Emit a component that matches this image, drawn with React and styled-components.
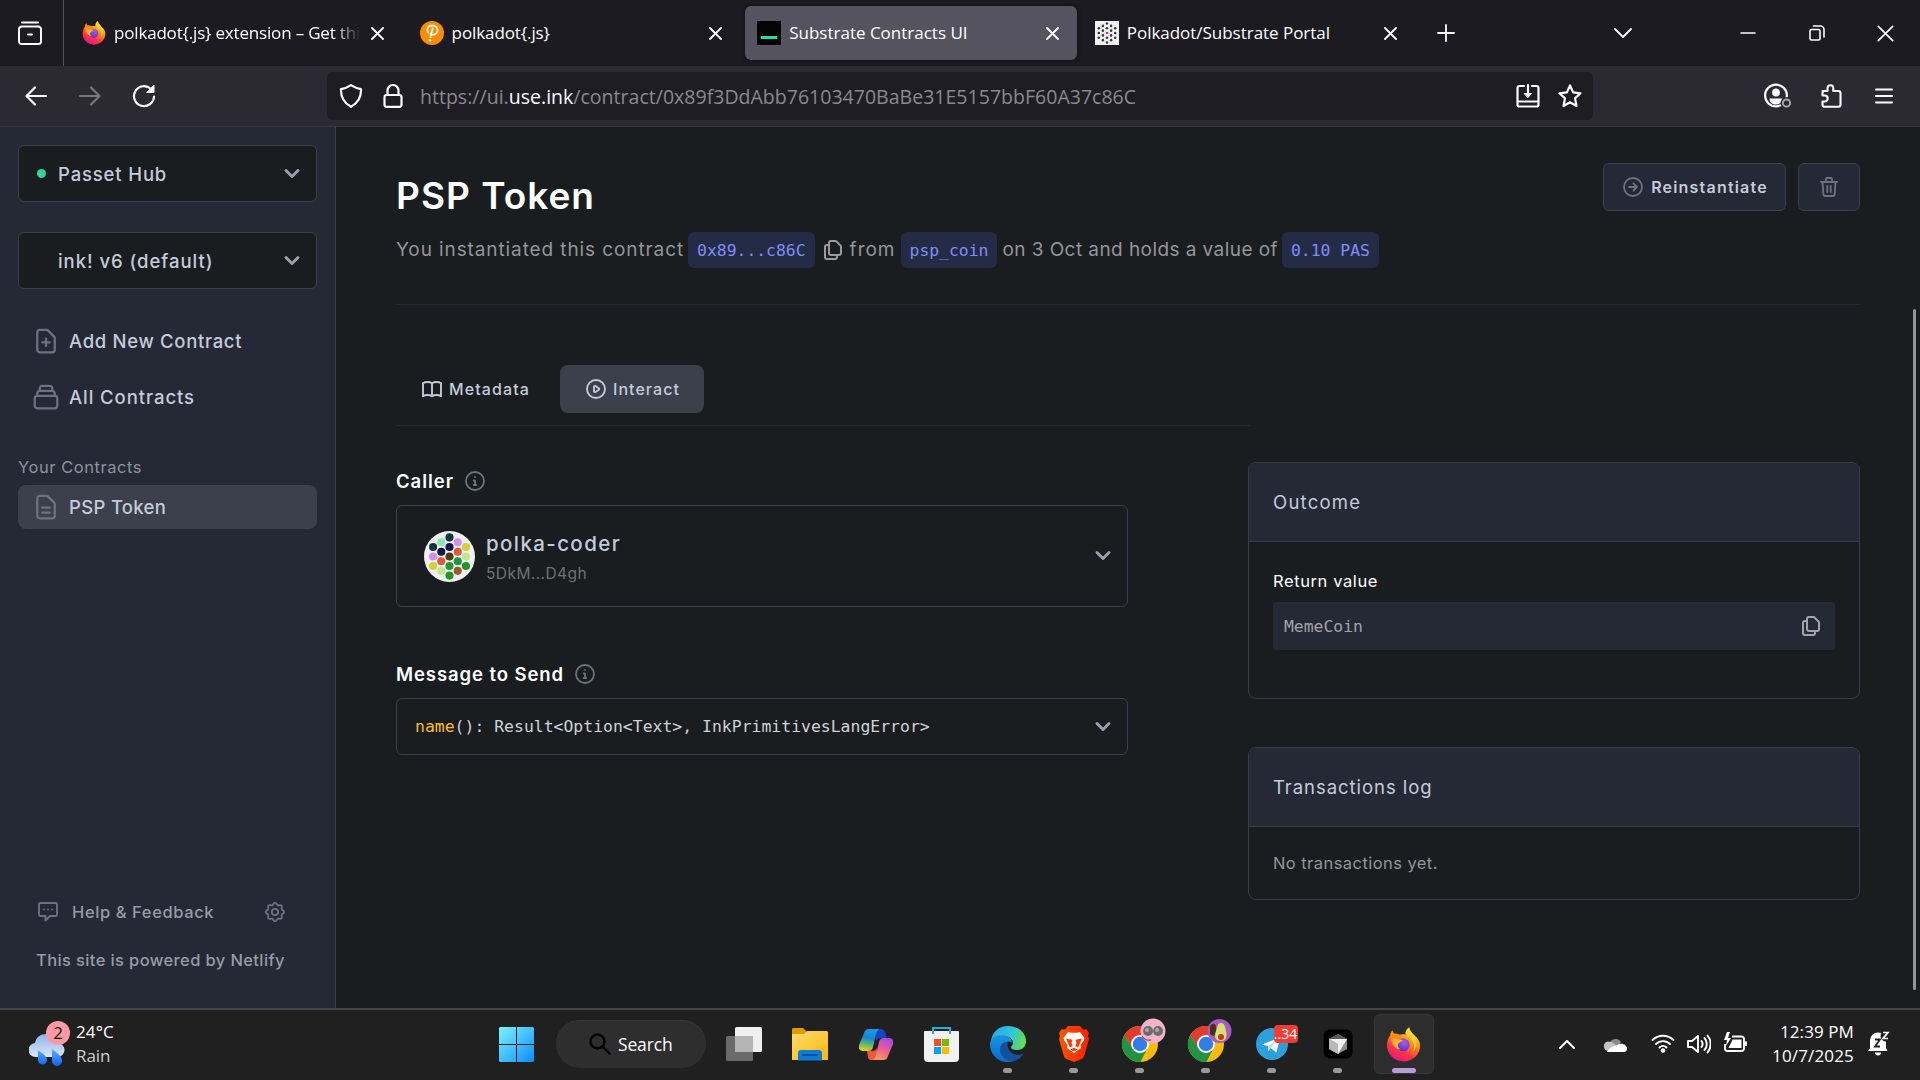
import React from "react";
import styled, { createGlobalStyle } from "styled-components";

const SANS = `Inter, Roboto, "Liberation Sans", sans-serif`;
const SYSTEM = `"Open Sans", "Noto Sans", sans-serif`;
const MONO = `"DejaVu Sans Mono", "Liberation Mono", monospace`;

const Global = createGlobalStyle`
  *, *::before, *::after { box-sizing: border-box; }
  body { margin: 0; background: #1a1d1f; font-family: ${SANS}; overflow: hidden; }
  svg { display: block; flex: none; }
`;

const Screen = styled.div`
  width: 1920px;
  height: 1080px;
  display: flex;
  flex-direction: column;
  overflow: hidden;
`;

const Text = styled.span`
  display: block;
  white-space: nowrap;
  font-family: ${(p) => p.$font || SANS};
  font-size: ${(p) => p.$size || 16}px;
  font-weight: ${(p) => p.$weight || 400};
  letter-spacing: ${(p) => p.$track || 0}px;
  line-height: ${(p) => p.$line || 24}px;
  color: ${(p) => p.$color || "#fff"};
`;
const Gap = styled.div`
  flex: none;
  width: ${(p) => p.$w || 0}px;
  height: ${(p) => p.$h || 0}px;
`;
const Spacer = styled.div`
  flex: 1;
`;

/* ---------- browser chrome ---------- */

const TabStrip = styled.div`
  height: 66px;
  flex: none;
  display: flex;
  align-items: center;
  background: #1c1b22;
  color: #fbfbfe;
`;
const ArchiveCell = styled.div`
  width: 64px;
  height: 66px;
  padding-left: 18px;
  display: flex;
  align-items: center;
  border-right: 1px solid #55545c;
`;
const Tabs = styled.div`
  display: flex;
  gap: 5.6px;
  padding-left: 6px;
`;
const Tab = styled.div`
  width: 332px;
  height: 54px;
  padding: 0 18px 0 12px;
  display: flex;
  align-items: center;
  gap: 8px;
  border-radius: 6px;
  background: ${(p) => (p.$active ? "#55535f" : "transparent")};
  box-shadow: ${(p) => (p.$active ? "0 0 4px rgba(0,0,0,.5)" : "none")};
`;
const TabTitle = styled(Text)`
  flex: 1;
  min-width: 0;
  overflow: hidden;
  ${(p) => p.$fade && "mask-image: linear-gradient(90deg, #000 88%, transparent 99%);"}
`;
const NewTab = styled.div`
  width: 18px;
  margin-left: 22px;
`;
const WindowButtons = styled.div`
  margin-left: auto;
  padding-right: 26px;
  display: flex;
  align-items: center;
`;
const NavBar = styled.div`
  height: 61px;
  flex: none;
  padding: 0 26px 0 24px;
  display: flex;
  align-items: center;
  background: #2b2a33;
  border-bottom: 1px solid #38373f;
  color: #fbfbfe;
`;
const UrlBar = styled.div`
  width: 1266px;
  height: 48px;
  margin-left: 171px;
  padding: 0 11px 0 12px;
  display: flex;
  align-items: center;
  border-radius: 6px;
  background: #1e1d24;
`;
const Url = styled(Text)`
  padding-top: 2px;
`;
const Host = styled.span`
  color: #fbfbfe;
`;

/* ---------- page ---------- */

const Page = styled.div`
  flex: 1;
  display: flex;
  min-height: 0;
`;
const Sidebar = styled.aside`
  width: 336px;
  flex: none;
  padding: 18px 18px 0;
  display: flex;
  flex-direction: column;
  background: #242935;
  border-right: 1px solid #3b404b;
`;
const Select = styled.div`
  height: ${(p) => p.$h || 57}px;
  padding: 0 15px 0 18px;
  display: flex;
  align-items: center;
  flex: none;
  border: 1px solid #3b404c;
  border-radius: 6px;
  background: #1a1d1f;
  color: #9a9fae;
  & > svg:last-child { margin-left: auto; }
`;
const Dot = styled.i`
  width: 9px;
  height: 9px;
  margin-right: 12px;
  border-radius: 50%;
  background: ${(p) => (p.$on ? "#34d399" : "transparent")};
`;
const NavItem = styled.div`
  height: 44px;
  width: 299px;
  padding-left: 13px;
  display: flex;
  align-items: center;
  gap: 8px;
  border-radius: 8px;
  color: #6b7280;
  background: ${(p) => (p.$active ? "#3b404b" : "transparent")};
`;
const SidebarFooter = styled.div`
  margin-top: auto;
  padding: 0 0 36px 18px;
`;
const HelpRow = styled.div`
  display: flex;
  align-items: center;
  padding-right: 30px;
  color: #6b7280;
  margin-bottom: 24px;
`;
const Main = styled.main`
  flex: 1;
  display: flex;
  flex-direction: column;
  padding: 36px 53px 0 60px;
  background: #1a1d1f;
`;
const Header = styled.header`
  height: 142px;
  display: flex;
  justify-content: space-between;
  border-bottom: 1px solid #242935;
`;
const Heading = styled.div`
  padding-top: 9px;
`;
const Actions = styled.div`
  display: flex;
  gap: 12px;
`;
const Button = styled.div`
  width: ${(p) => p.$w}px;
  height: 48px;
  display: flex;
  align-items: center;
  justify-content: center;
  gap: 6px;
  border: 1px solid #3b404c;
  border-radius: 6px;
  background: #242935;
  color: #6b7280;
`;
const Summary = styled.div`
  display: flex;
  align-items: center;
  height: 36px;
  margin-top: 12px;
  color: #9a9a9f;
`;
const Chip = styled(Text)`
  height: 36px;
  padding: 0 9px;
  border-radius: 6px;
  background: #242b45;
`;
const Columns = styled.div`
  display: flex;
`;
const Left = styled.section`
  width: 852px;
`;
const TabRow = styled.div`
  height: 61px;
  width: 854px;
  margin-top: 60px;
  display: flex;
  border-bottom: 1px solid #25282d;
  color: #c3c8d9;
`;
const ViewTab = styled.div`
  height: 48px;
  width: ${(p) => p.$w}px;
  padding-left: 24px;
  display: flex;
  align-items: center;
  gap: 5px;
  border-radius: 8px;
  background: ${(p) => (p.$active ? "#3b404b" : "transparent")};
`;
const Form = styled.div`
  width: 732px;
  padding-top: 40px;
  display: flex;
  flex-direction: column;
  gap: 9px;
  color: #c3c8d9;
`;
const Label = styled.div`
  display: flex;
  align-items: center;
  gap: 9px;
  height: 30px;
  color: #6b7280;
  ${Select} + & { margin-top: 43px; }
`;
const Account = styled.div`
  display: flex;
  flex-direction: column;
  padding: 6px 0 0 11px;
`;
const AvatarSlot = styled.div`
  margin-left: 9px;
`;
const Code = styled(Text)`
  padding-top: 1px;
`;
const Keyword = styled.span`
  color: #fbbf24;
`;
const Right = styled.section`
  width: 612px;
  padding-top: 157px;
  display: flex;
  flex-direction: column;
  gap: 48px;
`;
const Card = styled.div`
  height: ${(p) => p.$h}px;
  border: 1px solid #363d49;
  border-radius: 8px;
  overflow: hidden;
`;
const CardHead = styled.div`
  height: 79px;
  padding: 0 24px;
  display: flex;
  align-items: center;
  background: #242935;
  border-bottom: 1px solid #363d49;
`;
const CardBody = styled.div`
  padding: ${(p) => p.$top}px 24px 0;
`;
const Value = styled.div`
  height: 48px;
  margin-top: 9px;
  padding: 0 12px 0 11px;
  display: flex;
  align-items: center;
  justify-content: space-between;
  border-radius: 3px;
  background: #242935;
  color: #a3a3a9;
`;
const ScrollTrack = styled.div`
  width: 7px;
  flex: none;
  padding-top: 182px;
  background: #1a1d1f;
`;
const ScrollThumb = styled.div`
  width: 3px;
  height: 681px;
  border-radius: 2px;
  background: #959598;
`;

/* ---------- taskbar ---------- */

const Taskbar = styled.div`
  height: 72px;
  flex: none;
  padding-bottom: 2px;
  display: flex;
  align-items: center;
  background: #202020;
  border-top: 2px solid #454443;
`;
const Weather = styled.div`
  width: 486px;
  padding-left: 29px;
  display: flex;
  align-items: center;
  gap: 7px;
`;
const WeatherIcon = styled.div`
  position: relative;
  width: 40px;
  height: 46px;
  padding-top: 12px;
`;
const CountBadge = styled(Text)`
  position: absolute;
  top: 0;
  left: 17px;
  width: 24px;
  height: 24px;
  border-radius: 12px;
  text-align: center;
  background: #ff99a4;
`;
const Stack = styled.div`
  display: flex;
  flex-direction: column;
  align-items: ${(p) => p.$align || "flex-start"};
`;
const Cell = styled.div`
  position: relative;
  width: 60px;
  height: 60px;
  margin-right: ${(p) => (p.$flush ? 0 : 6)}px;
  display: flex;
  align-items: center;
  justify-content: center;
  border-radius: 6px;
  background: ${(p) => (p.$active ? "#2d2d2d" : "transparent")};
  box-shadow: ${(p) => (p.$active ? "inset 0 0 0 1px #353535" : "none")};
`;
const Indicator = styled.i`
  position: absolute;
  bottom: 1px;
  width: ${(p) => (p.$active ? 24 : 9)}px;
  height: 5px;
  border-radius: 3px;
  background: ${(p) => (p.$active ? "#b99bd8" : "#9a9a9a")};
`;
const SearchPill = styled.div`
  width: 150px;
  height: 48px;
  margin: 0 7.500px 0 10px;
  padding-left: 33px;
  display: flex;
  align-items: center;
  gap: 7px;
  border-radius: 24px;
  background: #2e2e2e;
  box-shadow: inset 0 1px 0 #383838;
`;
const TelegramBadge = styled(Text)`
  position: absolute;
  left: 32px;
  top: 11px;
  width: 24px;
  height: 18px;
  border-radius: 4px;
  text-align: center;
  background: #f23c34;
`;
const Tray = styled.div`
  margin-left: auto;
  padding-right: 30px;
  display: flex;
  align-items: center;
  color: #fff;
`;

/* ---------- icons ---------- */

const Line = ({ d, size = 24, sw = 2, box = 24, h, children }) => (
  <svg width={size} height={h || size} viewBox={`0 0 ${box} ${h ? (box * h) / size : box}`} fill="none" stroke="currentColor" strokeWidth={sw} strokeLinecap="round" strokeLinejoin="round">
    {d && <path d={d} />}
    {children}
  </svg>
);
const CIRCLE = "M21 12a9 9 0 11-18 0 9 9 0 0118 0z";
const PAGE = "M17 21H7a2 2 0 01-2-2V5a2 2 0 012-2h5.586a1 1 0 01.707.293l5.414 5.414a1 1 0 01.293.707V19a2 2 0 01-2 2z";
const D = {
  docAdd: "M9 13h6m-3-3v6" + PAGE,
  docText: "M9 12.500h6m-6 4h6" + PAGE,
  collection: "M19 11H5m14 0a2 2 0 012 2v6a2 2 0 01-2 2H5a2 2 0 01-2-2v-6a2 2 0 012-2m14 0V9a2 2 0 00-2-2M5 11V9a2 2 0 012-2m0 0V5a2 2 0 012-2h6a2 2 0 012 2v2M7 7h10",
  copy: "M8 7v8a2 2 0 002 2h8a2 2 0 002-2V8.400a1 1 0 00-.293-.707l-4.414-4.414A1 1 0 0014.586 3H10a2 2 0 00-2 2zM8 7H6a2 2 0 00-2 2v10a2 2 0 002 2h8a2 2 0 002-2v-2",
  book: "M12 6.253v13m0-13C10.832 5.477 9.246 5 7.500 5S4.168 5.477 3 6.253v13C4.168 18.477 5.754 18 7.500 18s3.332.477 4.500 1.253m0-13C13.168 5.477 14.754 5 16.500 5c1.747 0 3.332.477 4.500 1.253v13C19.832 18.477 18.247 18 16.500 18c-1.746 0-3.332.477-4.500 1.253",
  play: "M14.752 11.168l-3.197-2.132A1 1 0 0010 9.870v4.263a1 1 0 001.555.832l3.197-2.132a1 1 0 000-1.664z" + CIRCLE,
  info: "M13.300 16h-2.600m1.300 0v-4.500h-1.300M12 8h.01" + CIRCLE,
  arrow: "M12.500 8.500l3.500 3.500m0 0l-3.500 3.500m3.500-3.500H8" + CIRCLE,
  trash: "M18.500 7l-.867 12.142A2 2 0 0115.638 21H8.362a2 2 0 01-1.995-1.858L5.500 7m4.800 4v6m3.400-6v6m1.300-10V4a1 1 0 00-1-1h-4a1 1 0 00-1 1v3M4 7h16",
};
const Chevron = () => <Line size={18} box={18} sw={3} h={12} d="M3 2.500l6 6 6-6" />;
const CloseX = ({ s = 13, sw = 1.800 }) => <Line size={s} box={13} sw={sw} d="M1 1l11 11M12 1L1 12" />;

const FirefoxLogo = ({ size }) => (
  <svg width={size} height={size} viewBox="0 0 512 512">
    <defs>
      <linearGradient id="ffFlame" x1="0.8" y1="0.05" x2="0.3" y2="1">
        <stop offset="0" stopColor="#fff44f" />
        <stop offset="0.35" stopColor="#ff980e" />
        <stop offset="0.7" stopColor="#ff3647" />
        <stop offset="1" stopColor="#e31587" />
      </linearGradient>
      <radialGradient id="ffGlobe" cx="0.6" cy="0.3" r="0.7">
        <stop offset="0" stopColor="#a45bf0" />
        <stop offset="1" stopColor="#5b34c8" />
      </radialGradient>
    </defs>
    <path fill="url(#ffFlame)" d="M256 504C120 504 14 400 14 268c0-62 22-116 50-150 2-26 14-52 34-66 0 22 10 38 22 48 30-6 58 0 80 14 26-10 58-12 84-2-8-44 16-88 56-110 2 46 34 76 70 116 60 50 90 102 88 156C496 404 392 504 256 504z" />
    <path fill="#ff8a1c" d="M64 118c2-26 14-52 34-66 0 22 10 38 22 48 34-8 64 2 88 22l54 50-90 26-60 80C80 240 60 180 64 118z" />
    <circle cx="252" cy="262" r="94" fill="url(#ffGlobe)" />
    <path fill="#ffb52a" d="M112 170c40 18 80 14 116 18 20 4 22 14 8 22-22 12-46 16-58 40-14 28 2 60 36 74-58 2-104-36-112-88-2-26 0-46 10-66z" />
    <path fill="#ffd63a" opacity=".75" d="M340 2c2 46 34 76 70 116 50 60 50 190-10 240 30-100-10-180-70-210-36-40-46-90 10-146z" />
  </svg>
);
const PolkadotJs = () => (
  <svg width="24" height="24" viewBox="0 0 24 24">
    <circle cx="12" cy="12" r="12" fill="#ff8c00" />
    <path d="M8 11.500c-2-3 0-7 4.300-7 3.200 0 5.200 2 5.200 4.600s-2.100 4.600-4.500 4.600c-1.200 0-2.100-.3-2.600-.8M12.600 7.500l-2.200 8.700" fill="none" stroke="#fff" strokeWidth="1.800" strokeLinecap="round" />
    <circle cx="10" cy="19.200" r="1.200" fill="#fff" />
  </svg>
);
const InkFavicon = () => (
  <svg width="24" height="24" viewBox="0 0 24 24"><rect width="24" height="24" fill="#050505" /><rect x="4" y="15" width="16" height="3" fill="#12e8a6" /></svg>
);
const HEX = [[0, -10], [-4.300, -7.500], [4.300, -7.500], [-8.600, -5], [0, -5], [8.600, -5], [-4.300, -2.500], [4.300, -2.500], [-8.600, 0], [0, 0], [8.600, 0], [-4.300, 2.500], [4.300, 2.500], [-8.600, 5], [0, 5], [8.600, 5], [-4.300, 7.500], [4.300, 7.500], [0, 10]];
const PortalFavicon = () => (
  <svg width="24" height="24" viewBox="-12 -12 24 24">
    <rect x="-12" y="-12" width="24" height="24" fill="#f2f2f2" />
    {HEX.map(([x, y], i) => <circle key={i} cx={x * 0.950} cy={y * 0.950} r="1.300" fill={i === 9 ? "#e6219a" : "#3a3a3a"} />)}
  </svg>
);
const AVATAR = ["#0f3540", "#8fe6b4", "#d48fe8", "#0f3540", "#101648", "#d2d238", "#101648", "#dd5a3c", "#d48fe8", "#4a3c0e", "#bfe88c", "#dd5a3c", "#229638", "#d2d238", "#229638", "#229622", "#bfe88c", "#985a28", "#229622"];
const Avatar = () => (
  <svg width="51" height="51" viewBox="-25.500 -25.500 51 51">
    <circle r="25.500" fill="#f0f0f0" />
    {HEX.map(([x, y], i) => <circle key={i} cx={x * 1.910} cy={y * 1.910} r="4.050" fill={AVATAR[i]} />)}
  </svg>
);
const GEAR = Array.from({ length: 64 }, (_, i) => {
  const a = (i / 64) * Math.PI * 2;
  const r = 8.200 + 0.950 * Math.cos(a * 8);
  return `${i ? "L" : "M"}${(12 + r * Math.cos(a)).toFixed(2)} ${(12 + r * Math.sin(a)).toFixed(2)}`;
}).join("") + "Z";

const Start = () => (
  <svg width="35" height="35" viewBox="0 0 35 35">
    <defs><linearGradient id="win" x1="0" y1="0" x2="35" y2="35" gradientUnits="userSpaceOnUse"><stop offset="0" stopColor="#7df3ff" /><stop offset="1" stopColor="#0a8dfc" /></linearGradient></defs>
    <path fill="url(#win)" d="M1 0h16v17H0V1zM18 0h16l1 1v16H18zM0 18h17v17H1l-1-1zM18 18h17v16l-1 1H18z" />
  </svg>
);
const TaskView = () => (
  <svg width="36" height="34" viewBox="0 0 36 34">
    <rect x="9" width="27" height="25" rx="1.500" fill="#f0f0f0" />
    <rect y="9" width="27" height="25" rx="1.500" fill="#6a6a6a" />
    <rect x="9" y="9" width="18" height="16" fill="#b4b4b4" />
  </svg>
);
const Folder = () => (
  <svg width="36" height="34" viewBox="0 0 36 34">
    <defs><linearGradient id="fold" x1="0" y1="0" x2="1" y2="1"><stop offset="0" stopColor="#ffda70" /><stop offset="1" stopColor="#fcb90a" /></linearGradient></defs>
    <path d="M0 2a1 1 0 011-1h10l4 4v5H0z" fill="#dd9b05" />
    <path d="M0 7h12l3-3h20l1 1v28H0z" fill="url(#fold)" />
    <path d="M6 33.500V26a3 3 0 013-3h18a3 3 0 013 3v7.500z" fill="#0f7bd0" />
    <rect x="10" y="27" width="16" height="2" rx="1" fill="#07529a" />
  </svg>
);
const Copilot = () => (
  <svg width="34" height="31" viewBox="0 0 34 31">
    <defs>
      <linearGradient id="cpA" x1="0.500" y1="0" x2="0.300" y2="1"><stop offset="0" stopColor="#1a9be8" /><stop offset="0.400" stopColor="#1583d8" /><stop offset="0.700" stopColor="#5cba6c" /><stop offset="1" stopColor="#f0cf10" /></linearGradient>
      <linearGradient id="cpB" x1="0.800" y1="0" x2="0.300" y2="1"><stop offset="0" stopColor="#a048e8" /><stop offset="0.500" stopColor="#ee5a96" /><stop offset="1" stopColor="#ffa055" /></linearGradient>
    </defs>
    <path d="M16 0h6c2 0 3 1 4 3l2 6h-6c-3 0-4 1-5 3z" fill="#1746c0" />
    <path d="M18 31h-6c-2 0-3-1-3-3l-1-6h5c3 0 4-1 5-3z" fill="#f0583c" />
    <path d="M10 0h12c-3 0-4 2-5 5l-3 13c-1 3-2 4-5 4H4c-3 0-5-2-4-6L5 4c1-3 2-4 5-4z" fill="url(#cpA)" />
    <path d="M24 31H12c3 0 4-2 5-5l3-13c1-3 2-4 5-4h5c3 0 5 2 4 6l-5 12c-1 3-2 4-5 4z" fill="url(#cpB)" />
  </svg>
);
const Store = () => (
  <svg width="35" height="35" viewBox="0 0 35 35">
    <path d="M0 5q0-1 1-1h33q1 0 1 1v26q0 4-4 4H4q-4 0-4-4z" fill="#f1f1f1" />
    <path d="M9 7V1h17v6" fill="none" stroke="#22aee4" strokeWidth="2" />
    <path d="M10 12h7v7h-7z" fill="#f25022" /><path d="M18 12h7v7h-7z" fill="#7fba00" />
    <path d="M10 20h7v7h-7z" fill="#00a4ef" /><path d="M18 20h7v7h-7z" fill="#ffb900" />
  </svg>
);
const Edge = () => (
  <svg width="36" height="36" viewBox="0 0 36 36">
    <defs>
      <linearGradient id="edA" x1="0" y1="0.300" x2="1" y2="0.500"><stop offset="0" stopColor="#2aa7e8" /><stop offset="0.550" stopColor="#2fc2df" /><stop offset="1" stopColor="#66df4e" /></linearGradient>
      <linearGradient id="edB" x1="0" y1="0" x2="0" y2="1"><stop offset="0" stopColor="#1797e0" /><stop offset="1" stopColor="#0b6ad0" /></linearGradient>
    </defs>
    <path d="M1 15C2 6 9 0 18 0c10 0 18 7 18 15 0 6-4 9-9 9-4 0-6-1-6-3 0-1 2-2 2-4 0-4-4-7-9-7C8 10 3 12 1 15z" fill="url(#edA)" />
    <path d="M0 18C0 12 6 9 12 9c6 0 10 4 10 8-3-4-11 0-9 8 1 6 5 9 10 11C10 38 0 30 0 18z" fill="url(#edB)" />
    <path d="M13 17c-6 4-3 16 8 18.500 5 0 10-3 12.500-8-4 2-9 1.500-12-1-3-2-5-6-3.500-10-2-.5-3.500-.3-5 .5z" fill="#12529c" />
  </svg>
);
const Brave = () => (
  <svg width="32" height="36" viewBox="0 0 32 36">
    <defs><linearGradient id="brv" x1="0" y1="0" x2="1" y2="0"><stop offset="0" stopColor="#ff5601" /><stop offset="1" stopColor="#ff1f00" /></linearGradient></defs>
    <path d="M10 0h12l3 3.500 3.500-.3L31 7l-1 3 1 3-4.500 16c-.5 2-1.500 3-3 4L16 36l-7.500-3c-1.500-1-2.500-2-3-4L1 13l1-3-1-3 2.500-3.800 3.500.3z" fill="url(#brv)" />
    <path d="M10 6l3 .8h6L22 6l4.500 6-1 3-3 4 .5 3-5 3.500-2 2-2-2-5-3.500.5-3-3-4-1-3z" fill="#fff" />
    <path d="M8 12.500l6.500 1.200-1 3.300 1.200 3-2.700 1.500-1-2zM24 12.500l-6.500 1.200 1 3.300-1.200 3 2.700 1.500 1-2zM12.500 23.500l3.500-1.700 3.500 1.700-3.500 2z" fill="#ff3b00" />
  </svg>
);
const ChromeSvg = styled.svg`
  overflow: visible;
`;
const Chrome = ({ children }) => (
  <ChromeSvg width="54" height="44" viewBox="0 0 54 44">
    <g transform="translate(27 22)">
      <circle r="18" fill="#fbbc09" />
      <path d="M-15.600-9A18 18 0 00.500 18L7.400 4.200-7.400 4.200z" fill="#229342" />
      <path d="M0-18A18 18 0 0116-8.500H0L-7.400 4.200-15.600-9A18 18 0 010-18z" fill="#e33b2e" />
      <circle r="9" fill="#fff" /><circle r="7.200" fill="#2f7de9" />
      {children}
    </g>
  </ChromeSvg>
);
const Telegram = () => (
  <svg width="32" height="32" viewBox="0 0 32 32">
    <circle cx="16" cy="16" r="16" fill="#2ba0da" />
    <path d="M6 16.500L24 9.500l-3.500 15-6-4.500-2.500 3v-5z" fill="#fff" /><path d="M12 18l9-6-6.500 8-2.500 3z" fill="#c3dcec" />
  </svg>
);
const CursorApp = () => (
  <svg width="30" height="30" viewBox="0 0 30 30">
    <rect x=".5" y=".5" width="29" height="29" rx="6" fill="#000" />
    <path d="M15 5l9 5v10l-9 5-9-5V10z" fill="#8d8d8d" /><path d="M6 10h18l-9 15V15z" fill="#f2f2f2" /><path d="M15 15v10l-9-5V10z" fill="#b9b9b9" /><path d="M15 5l9 5H6z" fill="#5b5b5b" />
  </svg>
);
const RainCloud = () => (
  <svg width="36" height="34" viewBox="0 0 36 34">
    <defs>
      <linearGradient id="cld" x1="0" y1="0" x2="0" y2="1"><stop offset="0" stopColor="#8fb2ec" /><stop offset="1" stopColor="#dbe6fa" /></linearGradient>
      <linearGradient id="drp" x1="0" y1="0" x2="0" y2="1"><stop offset="0" stopColor="#5ab0ff" /><stop offset="1" stopColor="#0f62f0" /></linearGradient>
    </defs>
    <path d="M7 24a7 7 0 01-1-14C7 4 12 1 17 1c6 0 10 4 11 9a7 7 0 011 14z" fill="url(#cld)" />
    <path d="M9 17c5 4 9 6 9 10a4.500 4.500 0 01-9 0zM23 16c5 4 10 7 10 12a5 5 0 01-10 0z" fill="url(#drp)" />
  </svg>
);

/* ---------- small composites ---------- */

const INK = "#c5cbdc";
const MUTED = "#94959b";

const DropField = ({ on, track, children }) => (
  <Select>
    <Dot $on={on} />
    <Text $size={18.500} $weight={500} $track={track} $color={INK}>{children}</Text>
    <Chevron />
  </Select>
);
const SideLink = ({ icon, track, active, children }) => (
  <NavItem $active={active}>
    <Line size={30} sw={1.800} d={icon} />
    <Text $size={18.500} $weight={500} $track={track} $color={INK}>{children}</Text>
  </NavItem>
);
const FieldLabel = ({ track, children }) => (
  <Label>
    <Text $size={18.500} $weight={600} $track={track}>{children}</Text>
    <Line size={24} sw={1.800} d={D.info} />
  </Label>
);
const CodeChip = ({ children }) => (
  <Chip $font={MONO} $size={16.400} $line={37} $color="#818cf8">{children}</Chip>
);

export default function App() {
  return (
    <Screen>
      <Global />
      <TabStrip>
        <ArchiveCell>
          <Line size={24} sw={2} d="M4 1.500h16M3 5.500h18M3 6a2 2 0 00-2 2v12.500a2.500 2.500 0 002.500 2.500h17a2.500 2.500 0 002.500-2.500V8a2 2 0 00-2-2M10 13.500h4" />
        </ArchiveCell>
        <Tabs>
          <Tab><FirefoxLogo size={24} /><TabTitle $font={SYSTEM} $size={17} $track={-0.180} $fade>{"polkadot{.js} extension – Get this"}</TabTitle><CloseX /></Tab>
          <Tab><PolkadotJs /><TabTitle $font={SYSTEM} $size={17} $track={-0.100}>{"polkadot{.js}"}</TabTitle><CloseX /></Tab>
          <Tab $active><InkFavicon /><TabTitle $font={SYSTEM} $size={17}>Substrate Contracts UI</TabTitle><CloseX /></Tab>
          <Tab><PortalFavicon /><TabTitle $font={SYSTEM} $size={17} $track={-0.030}>Polkadot/Substrate Portal</TabTitle><CloseX /></Tab>
        </Tabs>
        <NewTab><Line size={18} box={18} sw={1.800} d="M9 1v16M1 9h16" /></NewTab>
        <WindowButtons>
          <Line size={18} box={18} h={12} sw={1.800} d="M1 2l8 8 8-8" />
          <Gap $w={108} />
          <Line size={16} box={16} sw={1.500} d="M1 8h14" />
          <Gap $w={53} />
          <Line size={16} box={16} sw={1.600} d="M2.500 4.500h7a1.500 1.500 0 011.500 1.500v7.500a1.500 1.500 0 01-1.500 1.500h-7A1.500 1.500 0 011 13.500V6a1.500 1.500 0 011.500-1.500zM4.500 1h7A3.500 3.500 0 0115 4.500V12" />
          <Gap $w={52} />
          <CloseX s={17} sw={1.300} />
        </WindowButtons>
      </TabStrip>

      <NavBar>
        <Line size={24} sw={2.200} d="M22 12H3M11 3.500L2.500 12l8.500 8.500" />
        <Gap $w={30} />
        <svg width="24" height="24" viewBox="0 0 24 24" fill="none" stroke="#77767e" strokeWidth="2.200" strokeLinecap="round" strokeLinejoin="round"><path d="M2 12h19M13 3.500l8.500 8.500-8.500 8.500" /></svg>
        <Gap $w={30} />
        <svg width="24" height="24" viewBox="0 0 24 24" fill="none" stroke="#fbfbfe" strokeWidth="2.200" strokeLinecap="round"><path d="M19 5a10 10 0 103 7.500" /><path d="M22 1.500V8.500H15z" fill="#fbfbfe" strokeWidth="1" strokeLinejoin="round" /></svg>
        <UrlBar>
          <Line size={24} sw={2.200} d="M12 1.200c3 2 6.500 3.300 10 4 .3 7-2.500 13.500-10 17.600C4.500 18.700 1.700 12.200 2 5.200c3.500-.7 7-2 10-4z" />
          <Gap $w={18} />
          <Line size={24} sw={2.200} d="M5.500 11h13a2 2 0 012 2v7.800a2 2 0 01-2 2h-13a2 2 0 01-2-2V13a2 2 0 012-2zM6.500 11V6.500a5.500 5.500 0 0111 0V11" />
          <Gap $w={15} />
          <Url $font={SYSTEM} $size={19.500} $line={30} $track={0.020} $color="#8a898f">https://ui.<Host>use.ink</Host>/contract/0x89f3DdAbb76103470BaBe31E5157bbF60A37c86C</Url>
          <Spacer />
          <svg width="24" height="24" viewBox="0 0 24 24" fill="none" stroke="#fbfbfe" strokeWidth="2.200" strokeLinecap="round" strokeLinejoin="round"><path d="M8 2H3.500A2 2 0 001.500 4v16.500a2 2 0 002 2h17a2 2 0 002-2V4a2 2 0 00-2-2H16M1.500 17.500h21M12 1v9" /><path d="M8.500 9.500h7L12 13.500z" fill="#fbfbfe" strokeWidth="1" /></svg>
          <Gap $w={18} />
          <Line size={24} sw={2.200} d="M12 1.500l3.100 6.900 7.400.9-5.500 5.100 1.500 7.600L12 18.200 5.500 22 7 14.400 1.500 9.300l7.400-.9z" />
        </UrlBar>
        <Spacer />
        <svg width="28" height="26" viewBox="0 0 28 26"><circle cx="12" cy="12.500" r="10.900" fill="none" stroke="#fbfbfe" strokeWidth="2.200" /><circle cx="12" cy="9.500" r="3.900" fill="#fbfbfe" /><path d="M5.500 15.500h13c0 4-3 6-6.500 6s-6.500-2-6.500-6z" fill="#fbfbfe" /><circle cx="22.500" cy="20" r="6" fill="#2b2a33" /><circle cx="22.500" cy="20" r="3.600" fill="none" stroke="#a3a3a8" strokeWidth="2" /></svg>
        <Gap $w={27} />
        <Line size={24} sw={2.100} d="M3.500 7h5V4.200a2.900 2.900 0 015.800 0V7h5.200a2 2 0 012 2v11.800a2 2 0 01-2 2h-14a2 2 0 01-2-2V17.500h2.200a3 3 0 000-6H3.500V9a2 2 0 012-2" />
        <Gap $w={31} />
        <Line size={20} box={20} sw={2} d="M2 3.500h16M2 10h16M2 16.500h16" />
      </NavBar>

      <Page>
        <Sidebar>
          <DropField on track={0.850}>Passet Hub</DropField>
          <Gap $h={30} />
          <DropField track={0.950}>ink! v6 (default)</DropField>
          <Gap $h={30} />
          <SideLink icon={D.docAdd} track={0.680}>Add New Contract</SideLink>
          <Gap $h={12} />
          <SideLink icon={D.collection} track={0.930}>All Contracts</SideLink>
          <Gap $h={36} />
          <Text $size={16.500} $track={0.540} $color="#8d939f">Your Contracts</Text>
          <Gap $h={6} />
          <SideLink icon={D.docText} track={0.320} active>PSP Token</SideLink>
          <SidebarFooter>
            <HelpRow>
              <Line size={24} sw={1.900} d="M4.500 3h15A1.500 1.500 0 0121 4.500v10a1.500 1.500 0 01-1.500 1.500H14l-4.500 4.500V16h-5A1.500 1.500 0 013 14.500v-10A1.500 1.500 0 014.500 3zM8 9.500h.01M12 9.500h.01M16 9.500h.01" />
              <Gap $w={12} />
              <Text $size={16.500} $weight={500} $track={0.600} $color="#979ca8">Help &amp; Feedback</Text>
              <Spacer />
              <Line size={24} sw={1.800} d={GEAR}><circle cx="12" cy="12" r="3.200" /></Line>
            </HelpRow>
            <Text $size={16.500} $weight={500} $track={0.380} $color="#979ca8">This site is powered by Netlify</Text>
          </SidebarFooter>
        </Sidebar>

        <Main>
          <Header>
            <Heading>
              <Text $size={37} $weight={600} $track={1.010} $line={48}>PSP Token</Text>
              <Summary>
                <Text $size={19} $track={0.900} $color={MUTED}>You instantiated this contract</Text>
                <Gap $w={4} />
                <CodeChip>0x89...c86C</CodeChip>
                <Gap $w={6} />
                <Line size={24} d={D.copy} />
                <Gap $w={5} />
                <Text $size={19} $track={1} $color={MUTED}>from</Text>
                <Gap $w={5} />
                <CodeChip>psp_coin</CodeChip>
                <Gap $w={5} />
                <Text $size={19} $track={0.430} $color={MUTED}>on 3 Oct and holds a value of</Text>
                <Gap $w={4} />
                <CodeChip>0.10 PAS</CodeChip>
              </Summary>
            </Heading>
            <Actions>
              <Button $w={183}><Line size={24} sw={1.800} d={D.arrow} /><Text $size={16} $weight={600} $track={1.200} $color={INK}>Reinstantiate</Text></Button>
              <Button $w={62}><Line size={24} sw={1.800} d={D.trash} /></Button>
            </Actions>
          </Header>
          <Columns>
            <Left>
              <TabRow>
                <ViewTab $w={164}><Line size={24} sw={1.900} d={D.book} /><Text $size={16} $weight={500} $track={1.100} $line={26} $color={INK}>Metadata</Text></ViewTab>
                <ViewTab $w={144} $active><Line size={24} sw={1.900} d={D.play} /><Text $size={16} $weight={500} $track={1.050} $line={26} $color={INK}>Interact</Text></ViewTab>
              </TabRow>
              <Form>
                <FieldLabel track={0.960}>Caller</FieldLabel>
                <Select $h={102}>
                  <AvatarSlot><Avatar /></AvatarSlot>
                  <Account>
                    <Text $size={20.500} $weight={500} $track={1.390} $line={30} $color={INK}>polka-coder</Text>
                    <Text $size={15.500} $track={0.420} $line={30} $color="#6f7175">5DkM...D4gh</Text>
                  </Account>
                  <Chevron />
                </Select>
                <FieldLabel track={0.920}>Message to Send</FieldLabel>
                <Select>
                  <Code $font={MONO} $size={16.400} $track={0.030} $color="#cfd2da"><Keyword>name</Keyword>(): Result&lt;Option&lt;Text&gt;, InkPrimitivesLangError&gt;</Code>
                  <Chevron />
                </Select>
              </Form>
            </Left>
            <Right>
              <Card $h={237}>
                <CardHead><Text $size={18.500} $track={1.250} $color={INK}>Outcome</Text></CardHead>
                <CardBody $top={27}>
                  <Text $size={16.500} $track={0.600}>Return value</Text>
                  <Value><Code $font={MONO} $size={16.400} $color="#a3a3a9">MemeCoin</Code><Line size={24} d={D.copy} /></Value>
                </CardBody>
              </Card>
              <Card $h={153}>
                <CardHead><Text $size={18.500} $track={0.950} $color={INK}>Transactions log</Text></CardHead>
                <CardBody $top={24}><Text $size={16.500} $track={0.440} $color={MUTED}>No transactions yet.</Text></CardBody>
              </Card>
            </Right>
          </Columns>
        </Main>
        <ScrollTrack><ScrollThumb /></ScrollTrack>
      </Page>

      <Taskbar>
        <Weather>
          <WeatherIcon>
            <RainCloud />
            <CountBadge $font={SYSTEM} $size={17} $color="#111">2</CountBadge>
          </WeatherIcon>
          <Stack>
            <Text $font={SYSTEM} $size={17} $track={0.100}>24°C</Text>
            <Text $font={SYSTEM} $size={17} $track={-0.100} $color="#cfcfcf">Rain</Text>
          </Stack>
        </Weather>
        <Cell $flush><Start /></Cell>
        <SearchPill>
          <Line size={22} box={22} sw={2.400} d="M15.500 8.500a7 7 0 11-14 0 7 7 0 0114 0zM14 14l6.500 6.500" />
          <Text $font={SYSTEM} $size={17.500} $track={-0.150}>Search</Text>
        </SearchPill>
        <Cell><TaskView /></Cell>
        <Cell><Folder /></Cell>
        <Cell><Copilot /></Cell>
        <Cell><Store /></Cell>
        <Cell><Edge /><Indicator /></Cell>
        <Cell><Brave /><Indicator /></Cell>
        <Cell>
          <Chrome><circle cx="13" cy="-13" r="12.500" fill="#f4b3c8" /><circle cx="8" cy="-13" r="5" fill="#6f6a6c" /><circle cx="18" cy="-13" r="5" fill="#6f6a6c" /><circle cx="7" cy="-14" r="2" fill="#aaa" /><circle cx="17" cy="-14" r="2" fill="#aaa" /><path d="M2-8q3 5 9 4" fill="none" stroke="#8a4a5c" strokeWidth="1.200" /></Chrome>
          <Indicator />
        </Cell>
        <Cell>
          <Chrome><circle cx="13.500" cy="-13" r="12" fill="#a55cc0" /><path d="M4-18q4-5 6 0v9q-4 2-6-1z" fill="#4a2e20" /><path d="M15-21c4 0 4 4 5 8s1 10-5 10-7-5-5-10 1-8 5-8z" fill="#dbe070" /><circle cx="15" cy="-7" r="3" fill="#c23a18" /></Chrome>
          <Indicator />
        </Cell>
        <Cell><Telegram /><TelegramBadge $font={SYSTEM} $size={14} $line={17}>..34</TelegramBadge><Indicator /></Cell>
        <Cell><CursorApp /><Indicator /></Cell>
        <Cell $active><FirefoxLogo size={35} /><Indicator $active /></Cell>
        <Tray>
          <Line size={18} box={18} h={12} sw={2} d="M2 10l7-7 7 7" />
          <Gap $w={27} />
          <svg width="24" height="18" viewBox="0 0 24 18"><path d="M6 10a6.500 6.500 0 0112-3l-4 6z" fill="#8a8a8a" /><path d="M5 16a4.800 4.800 0 010-9.500c4 0 7 2 10 6l-4 4z" fill="#c4c4c4" /><path d="M4 17c2-5 8-6 10-7 5-3 10 0 10 3.500A3.500 3.500 0 0120.500 17z" fill="#fff" /></svg>
          <Gap $w={24} />
          <Line size={24} sw={1.900} d="M1.500 8a15 15 0 0121 0M5 12a10 10 0 0114 0M8.500 15.500a5 5 0 017 0"><circle cx="12" cy="18.500" r="1.400" fill="currentColor" /></Line>
          <Gap $w={12} />
          <Line size={24} sw={1.900} d="M1 9h4l6-5v16l-6-5H1zM14.500 9a5 5 0 010 6M17.500 6a9 9 0 010 12M20.500 3.500a13 13 0 010 17" />
          <Gap $w={12} />
          <svg width="24" height="24" viewBox="0 0 24 24"><path d="M9 4.500h9.500a2.500 2.500 0 012.500 2.500v9.500a2.500 2.500 0 01-2.500 2.500h-14A2.500 2.500 0 012 16.500V12" fill="none" stroke="#fff" strokeWidth="1.900" /><path d="M9.500 7.500h9v8.500h-13L8 11z" fill="#fff" /><path d="M21.500 9.500H24V14h-2.500z" fill="#fff" /><path d="M4 0L1 8h3l-1 6 5-8H5l2-6z" fill="#fff" /></svg>
          <Gap $w={25} />
          <Stack $align="flex-end">
            <Text $font={SYSTEM} $size={17} $track={0.090}>12:39 PM</Text>
            <Text $font={SYSTEM} $size={17} $track={0.160}>10/7/2025</Text>
          </Stack>
          <Gap $w={14} />
          <svg width="22" height="26" viewBox="0 0 22 26"><path d="M2 17V9.500a8 8 0 0116 0V17l1.500 3H0zM7 21.500h6a3 3 0 01-6 0z" fill="#fff" /><circle cx="18" cy="5" r="5.500" fill="#202020" /><path d="M15 1.500h5l-5 6h5" fill="none" stroke="#fff" strokeWidth="1.700" /><path d="M7 8.500h5l-5 7h5" fill="none" stroke="#202020" strokeWidth="1.800" /></svg>
        </Tray>
      </Taskbar>
    </Screen>
  );
}
